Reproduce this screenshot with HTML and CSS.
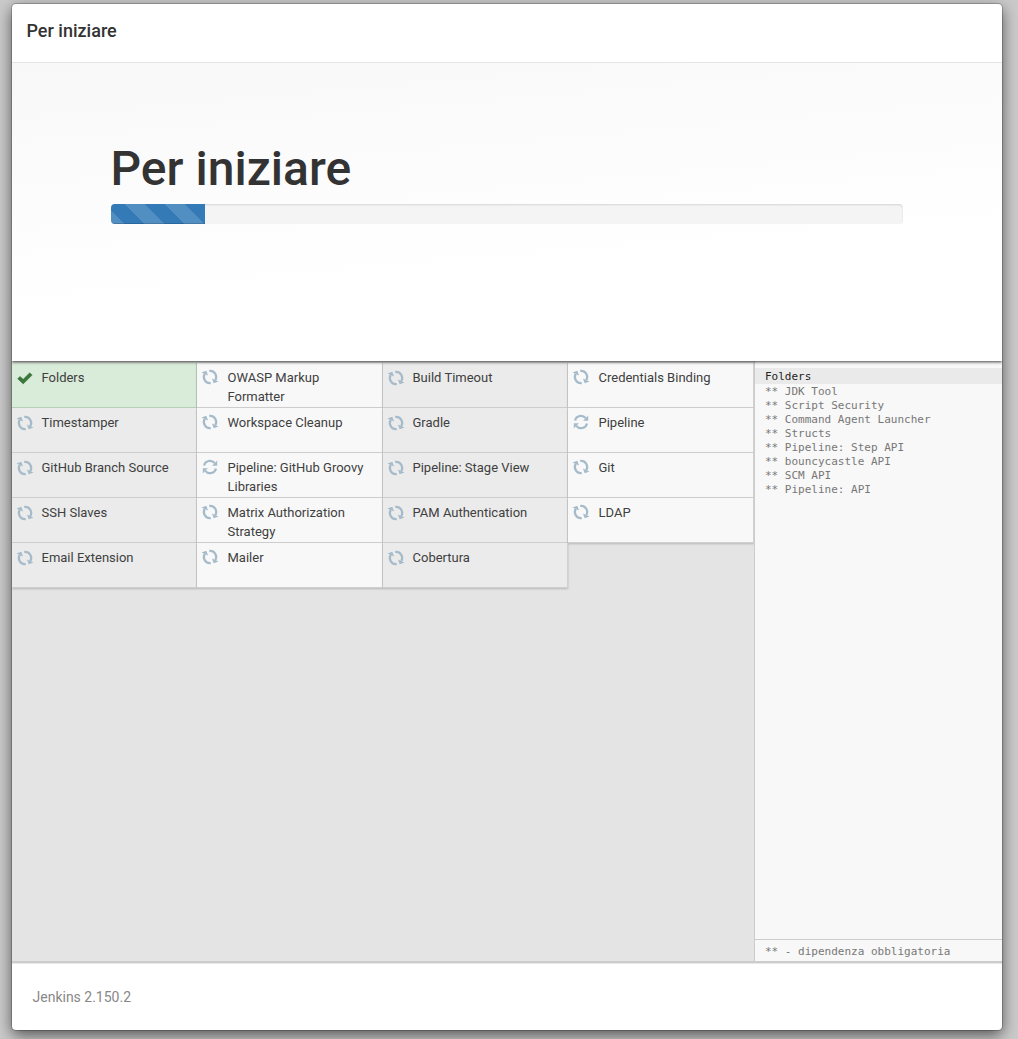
FILE: index.html
```
<!DOCTYPE html>
<html lang="it">
<head>
<meta charset="utf-8">
<title>Per iniziare</title>
<link rel="stylesheet" href="styles.css">
</head>
<body>
<svg class="symbols" aria-hidden="true">
  <symbol id="sync" viewBox="0 0 16 16">
    <path d="M2 6.6A6.1 6.1 0 0 1 12.7 4.1" fill="none" stroke="currentColor" stroke-width="2.2"/>
    <path d="M15.2 1.6V6.7H10.1Z" fill="currentColor"/>
    <path d="M14 9.4A6.1 6.1 0 0 1 3.3 11.9" fill="none" stroke="currentColor" stroke-width="2.2"/>
    <path d="M.8 14.4V9.3H5.9Z" fill="currentColor"/>
  </symbol>
  <symbol id="check" viewBox="0 0 16 16">
    <path d="M.6 8.7 3 6.4 6.2 9.2 12.7 2.8 15.2 5.1 6.2 13.9Z" fill="currentColor" stroke="currentColor" stroke-width=".5" stroke-linejoin="round"/>
  </symbol>
</svg>
<div class="dialog">
  <header class="dialog-header"><h4>Per iniziare</h4></header>
  <section class="hero">
    <h1>Per iniziare</h1>
    <div class="progress"><div class="progress-bar"></div></div>
  </section>
  <main class="content">
    <div class="plugins">
      <div class="plugin done"><svg><use href="#check"/></svg><span>Folders</span></div>
      <div class="plugin"><svg><use href="#sync"/></svg><span>OWASP Markup Formatter</span></div>
      <div class="plugin"><svg><use href="#sync"/></svg><span>Build Timeout</span></div>
      <div class="plugin"><svg><use href="#sync"/></svg><span>Credentials Binding</span></div>
      <div class="plugin"><svg><use href="#sync"/></svg><span>Timestamper</span></div>
      <div class="plugin"><svg><use href="#sync"/></svg><span>Workspace Cleanup</span></div>
      <div class="plugin"><svg><use href="#sync"/></svg><span>Gradle</span></div>
      <div class="plugin idle"><svg><use href="#sync"/></svg><span>Pipeline</span></div>
      <div class="plugin"><svg><use href="#sync"/></svg><span>GitHub Branch Source</span></div>
      <div class="plugin idle"><svg><use href="#sync"/></svg><span>Pipeline: GitHub Groovy Libraries</span></div>
      <div class="plugin"><svg><use href="#sync"/></svg><span>Pipeline: Stage View</span></div>
      <div class="plugin"><svg><use href="#sync"/></svg><span>Git</span></div>
      <div class="plugin"><svg><use href="#sync"/></svg><span>SSH Slaves</span></div>
      <div class="plugin"><svg><use href="#sync"/></svg><span>Matrix Authorization Strategy</span></div>
      <div class="plugin"><svg><use href="#sync"/></svg><span>PAM Authentication</span></div>
      <div class="plugin"><svg><use href="#sync"/></svg><span>LDAP</span></div>
      <div class="plugin"><svg><use href="#sync"/></svg><span>Email Extension</span></div>
      <div class="plugin"><svg><use href="#sync"/></svg><span>Mailer</span></div>
      <div class="plugin"><svg><use href="#sync"/></svg><span>Cobertura</span></div>
    </div>
    <aside class="console">
      <div class="log">
        <div class="current">Folders</div>
        <div>** JDK Tool</div>
        <div>** Script Security</div>
        <div>** Command Agent Launcher</div>
        <div>** Structs</div>
        <div>** Pipeline: Step API</div>
        <div>** bouncycastle API</div>
        <div>** SCM API</div>
        <div>** Pipeline: API</div>
      </div>
      <div class="legend">** - dipendenza obbligatoria</div>
    </aside>
  </main>
  <footer class="dialog-footer">Jenkins 2.150.2</footer>
</div>
</body>
</html>
```
FILE: styles.css
```
* { box-sizing: border-box; }
body {
  margin: 0;
  height: 1039px;
  padding: 4px 16px 9px 12px;
  overflow: hidden;
  background: #cacaca;
  color: #333;
  font-family: Roboto, "Liberation Sans", sans-serif;
}
.symbols { display: none; }
.dialog {
  display: flex;
  flex-direction: column;
  height: 1026px;
  overflow: hidden;
  background: #fff;
  border-radius: 4px;
  box-shadow: 0 0 0 1px rgba(0, 0, 0, .2), 0 5px 15px rgba(0, 0, 0, .6);
}
.dialog-header {
  flex: none;
  height: 59px;
  padding: 14px 14.5px;
  border-bottom: 1px solid #e5e5e5;
}
h4 { margin: 0; font-size: 18px; font-weight: 500; line-height: 26px; }
.hero {
  position: relative;
  z-index: 1;
  flex: none;
  height: 298px;
  padding: 79px 99px 0;
  background: linear-gradient(175deg, #f8f8f8, #fff 65%);
  box-shadow: 0 1px 3px rgba(0, 0, 0, .75);
  clip-path: inset(0 0 -8px);
}
h1 { margin: 0 0 9px -.5px; font-size: 48px; font-weight: 500; line-height: 53px; }
.progress {
  height: 20px;
  overflow: hidden;
  background: #f4f4f4;
  border-radius: 4px;
  box-shadow: inset 0 1px 2px rgba(0, 0, 0, .13);
}
.progress-bar {
  width: 94px;
  height: 100%;
  background: linear-gradient(45deg, rgba(255, 255, 255, .15) 25%, transparent 25%, transparent 50%, rgba(255, 255, 255, .15) 50%, rgba(255, 255, 255, .15) 75%, transparent 75%) 14px 0 / 40px 40px #337ab7;
  box-shadow: inset 0 -1px 0 rgba(0, 0, 0, .15);
}
.content { display: flex; flex: 1; min-height: 0; border-bottom: 2px solid #ccc; }
.plugins {
  display: grid;
  flex: 1;
  grid-template-columns: 185px 186px 185px 1fr;
  grid-auto-rows: 45px;
  align-content: start;
  padding-top: 2px;
  background: #e4e4e4;
}
.plugin {
  display: flex;
  gap: 8px;
  padding: 5px 11px 0 5px;
  background: #ebebeb;
  border-right: 1px solid #d0d0d0;
  border-bottom: 1px solid #d0d0d0;
  box-shadow: 0 1px 2px rgba(0, 0, 0, .2);
  color: #404040;
  font-size: 13px;
  line-height: 19px;
}
.plugin:nth-child(even) { background: #f8f8f8; }
.plugin:nth-child(4n + 2) { padding-left: 6px; }
.plugin:nth-child(4n) { padding-left: 6px; }
.plugin.done { background: #d9ecd9; border-color: #b8d2b8; }
.plugin svg {
  flex: none;
  width: 16px;
  height: 16px;
  margin: 2px .5px 0 0;
  color: #a6bbca;
  transform: rotate(70deg);
}
.plugin:nth-child(even) svg { margin: 1px 1.5px 0 -1px; }
.plugin.idle svg { transform: none; }
.plugin.done svg { color: #3c763d; transform: none; }
.console {
  display: flex;
  flex-direction: column;
  width: 248px;
  background: #f8f8f8;
  border-left: 1px solid #ccc;
  color: #777;
  font: 11px/14px "DejaVu Sans Mono", "Liberation Mono", monospace;
}
.log { flex: 1; padding-top: 7px; }
.log div { position: relative; top: 1px; padding-left: 10px; }
.log .current { top: 0; padding-top: 1px; line-height: 15px; background: #eaeaea; color: #222; }
.legend { height: 22px; padding: 5px 10px 0; border-top: 1px solid #ccc; }
.dialog-footer {
  flex: none;
  height: 67px;
  padding: 23px 20.5px;
  border-top: 1px solid #e8e8e8;
  color: #888;
  font-size: 14px;
  line-height: 20px;
}
```
